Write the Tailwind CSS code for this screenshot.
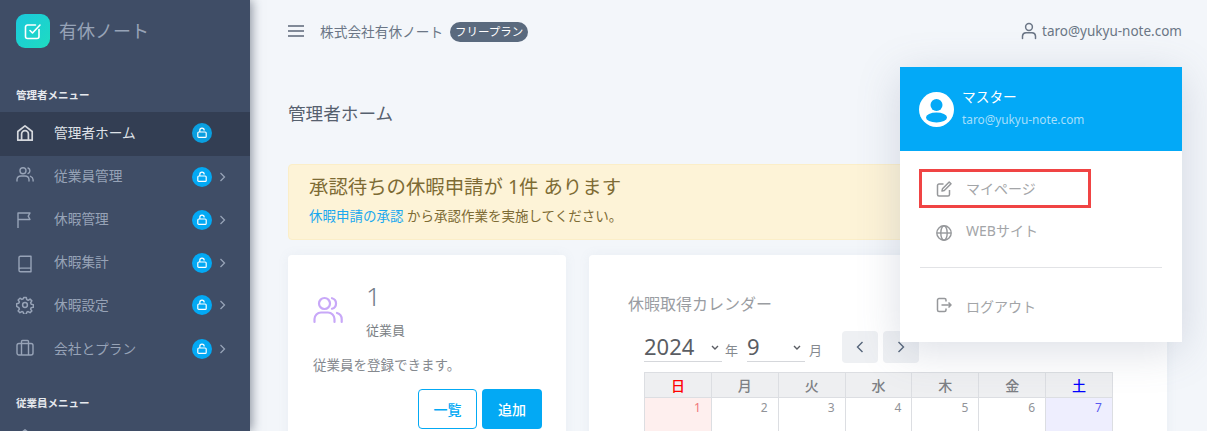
<!DOCTYPE html>
<html lang="ja">
<head>
  <meta charset="UTF-8" />
  <title>有休ノート</title>
  <script src="https://cdn.jsdelivr.net/npm/@tailwindcss/browser@4"></script>
</head>
<body class="h-[431px] w-[1207px] overflow-hidden bg-[#f3f6fa] font-['Noto_Sans','Noto_Sans_CJK_JP',sans-serif]">
<div class="relative flex h-[431px]">

  <!-- Sidebar -->
  <aside class="z-10 h-[431px] w-[250px] shrink-0 overflow-hidden bg-[#3f4d66] shadow-[2px_0_10px_rgba(40,50,70,0.5)]">
    <div class="flex h-[62px] items-center pl-4">
      <div class="flex h-[34px] w-[34px] items-center justify-center rounded-[9px] bg-gradient-to-br from-[#1cc8dc] to-[#1fdcc0]">
        <svg class="h-[20px] w-[20px]" viewBox="0 0 20 20" fill="none" stroke="#fff" stroke-width="1.6" stroke-linecap="round" stroke-linejoin="round"><path d="M16 8.5V15.5a2 2 0 0 1-2 2H4.5a2 2 0 0 1-2-2V6a2 2 0 0 1 2-2h8"/><path d="M7 9.5l2.5 2.5L17 4"/></svg>
      </div>
      <span class="ml-[9px] text-[18px] text-[#97a3b7]">有休ノート</span>
    </div>
    <p class="mt-[25px] pl-4 text-[10.5px] leading-[16px] font-bold text-[#e6e9ee]">管理者メニュー</p>
    <nav class="mt-[9px]">
      <a class="flex h-[44px] items-center bg-[#333e53] pb-[2px] pl-4 text-[#dfe2e8]">
        <svg class="h-[18px] w-[18px] shrink-0" viewBox="0 0 18 18" fill="none" stroke="#d5d8dd" stroke-width="1.7" stroke-linejoin="round"><path d="M1.8 7.5 9 1.8l7.2 5.700v8.700H1.800z"/><path d="M5.600 16.200V10a3.400 3.400 0 0 1 6.800 0v6.200"/></svg>
        <span class="ml-5 w-[138px] text-[13.7px]">管理者ホーム</span>
        <span class="flex h-5 w-5 items-center justify-center rounded-full bg-[#0a9fe0]"><svg class="h-3 w-3" viewBox="0 0 12 12" fill="none" stroke="#fff" stroke-width="1.2"><rect x="1.8" y="5" width="8.4" height="5.4" rx="1"/><path d="M3.800 5V3.400a2.200 2.200 0 0 1 4.400 0"/></svg></span>
      </a>
      <a class="flex h-[43px] items-center pb-[2px] pl-4 text-[#97a3b7]">
        <svg class="-mt-[4px] h-[18px] w-[18px] shrink-0" viewBox="0 0 18 18" fill="none" stroke="#97a3b7" stroke-width="1.4" stroke-linecap="round"><circle cx="7" cy="4.8" r="3"/><path d="M1 15v-1.5A4 4 0 0 1 5 10h4a4 4 0 0 1 4 3.5V15"/><path d="M12 2a3 3 0 0 1 0 5.6M14.5 10.3a4 4 0 0 1 2.6 3.4V15"/></svg>
        <span class="ml-5 w-[138px] text-[13.7px]">従業員管理</span>
        <span class="flex h-5 w-5 items-center justify-center rounded-full bg-[#03a9f4]"><svg class="h-3 w-3" viewBox="0 0 12 12" fill="none" stroke="#fff" stroke-width="1.2"><rect x="1.8" y="5" width="8.4" height="5.4" rx="1"/><path d="M3.800 5V3.400a2.200 2.200 0 0 1 4.400 0"/></svg></span>
        <svg class="ml-[7px] h-[10px] w-[7px]" viewBox="0 0 7 10" fill="none" stroke="#97a3b7" stroke-width="1.3"><path d="M1.5 1l4 4-4 4"/></svg>
      </a>
      <a class="flex h-[43px] items-center pb-[2px] pl-4 text-[#97a3b7]">
        <svg class="h-[18px] w-[18px] shrink-0" viewBox="0 0 18 18" fill="none" stroke="#97a3b7" stroke-width="1.4" stroke-linejoin="round"><path d="M2 17V2h12l-1.800 3.200L14 8.500H2"/></svg>
        <span class="ml-5 w-[138px] text-[13.7px]">休暇管理</span>
        <span class="flex h-5 w-5 items-center justify-center rounded-full bg-[#03a9f4]"><svg class="h-3 w-3" viewBox="0 0 12 12" fill="none" stroke="#fff" stroke-width="1.2"><rect x="1.8" y="5" width="8.4" height="5.4" rx="1"/><path d="M3.800 5V3.400a2.200 2.200 0 0 1 4.400 0"/></svg></span>
        <svg class="ml-[7px] h-[10px] w-[7px]" viewBox="0 0 7 10" fill="none" stroke="#97a3b7" stroke-width="1.3"><path d="M1.5 1l4 4-4 4"/></svg>
      </a>
      <a class="flex h-[43px] items-center pb-[2px] pl-4 text-[#97a3b7]">
        <svg class="mt-[3px] h-[18px] w-[18px] shrink-0" viewBox="0 0 18 18" fill="none" stroke="#97a3b7" stroke-width="1.4" stroke-linejoin="round"><path d="M3 14.5V2.6A1.4 1.4 0 0 1 4.4 1.2H15v15.6H4.6A1.6 1.6 0 0 1 3 15.2v-.7a1.6 1.6 0 0 1 1.6-1.4H15"/></svg>
        <span class="ml-5 w-[138px] text-[13.7px]">休暇集計</span>
        <span class="flex h-5 w-5 items-center justify-center rounded-full bg-[#03a9f4]"><svg class="h-3 w-3" viewBox="0 0 12 12" fill="none" stroke="#fff" stroke-width="1.2"><rect x="1.8" y="5" width="8.4" height="5.4" rx="1"/><path d="M3.800 5V3.400a2.200 2.200 0 0 1 4.400 0"/></svg></span>
        <svg class="ml-[7px] h-[10px] w-[7px]" viewBox="0 0 7 10" fill="none" stroke="#97a3b7" stroke-width="1.3"><path d="M1.5 1l4 4-4 4"/></svg>
      </a>
      <a class="flex h-[43px] items-center pb-[3px] pl-4 text-[#97a3b7]">
        <svg class="h-[18px] w-[18px] shrink-0" viewBox="0 0 24 24" fill="none" stroke="#97a3b7" stroke-width="2" stroke-linejoin="round"><circle cx="12" cy="12" r="3.2"/><path d="M10.3 2h3.4l.6 2.9 1.9.8 2.5-1.6 2.4 2.4-1.6 2.5.8 1.9 2.9.6v3.4l-2.9.6-.8 1.9 1.6 2.5-2.4 2.4-2.5-1.6-1.9.8-.6 2.9h-3.4l-.6-2.9-1.9-.8-2.5 1.6-2.4-2.4 1.6-2.5-.8-1.9L.8 13.7v-3.4l2.9-.6.8-1.9-1.6-2.5 2.4-2.4 2.5 1.6 1.9-.8z"/></svg>
        <span class="ml-5 w-[138px] text-[13.7px]">休暇設定</span>
        <span class="flex h-5 w-5 items-center justify-center rounded-full bg-[#03a9f4]"><svg class="h-3 w-3" viewBox="0 0 12 12" fill="none" stroke="#fff" stroke-width="1.2"><rect x="1.8" y="5" width="8.4" height="5.4" rx="1"/><path d="M3.800 5V3.400a2.200 2.200 0 0 1 4.400 0"/></svg></span>
        <svg class="ml-[7px] h-[10px] w-[7px]" viewBox="0 0 7 10" fill="none" stroke="#97a3b7" stroke-width="1.3"><path d="M1.5 1l4 4-4 4"/></svg>
      </a>
      <a class="flex h-[43px] items-center pb-[1px] pl-4 text-[#97a3b7]">
        <svg class="-mt-[2px] h-[18px] w-[18px] shrink-0" viewBox="0 0 18 18" fill="none" stroke="#97a3b7" stroke-width="1.4" stroke-linejoin="round"><rect x="1" y="4.5" width="16" height="11.5" rx="2"/><path d="M5.500 16V2.500a1 1 0 0 1 1-1h5a1 1 0 0 1 1 1V16"/></svg>
        <span class="ml-5 w-[138px] text-[13.7px]">会社とプラン</span>
        <span class="flex h-5 w-5 items-center justify-center rounded-full bg-[#03a9f4]"><svg class="h-3 w-3" viewBox="0 0 12 12" fill="none" stroke="#fff" stroke-width="1.2"><rect x="1.8" y="5" width="8.4" height="5.4" rx="1"/><path d="M3.800 5V3.400a2.200 2.200 0 0 1 4.400 0"/></svg></span>
        <svg class="ml-[7px] h-[10px] w-[7px]" viewBox="0 0 7 10" fill="none" stroke="#97a3b7" stroke-width="1.3"><path d="M1.5 1l4 4-4 4"/></svg>
      </a>
    </nav>
    <p class="mt-[24px] pl-4 text-[10.5px] leading-[16px] font-bold text-[#e6e9ee]">従業員メニュー</p>
    <div class="mt-[17px] pl-4"><svg class="h-[18px] w-[18px]" viewBox="0 0 18 18" fill="none" stroke="#97a3b7" stroke-width="1.5" stroke-linejoin="round"><path d="M1.8 7.5 9 1.8l7.2 5.700v8.700H1.800z"/></svg></div>
  </aside>

  <!-- Main -->
  <main class="min-w-0 flex-1 pl-[38px] pr-[40px]">
    <header class="flex h-[64px] items-center">
      <svg class="-mt-[3px] h-[12px] w-[16px] shrink-0" viewBox="0 0 16 12" fill="none" stroke="#5c6778" stroke-width="1.4"><path d="M0 1h16M0 6h16M0 11h16"/></svg>
      <span class="ml-[16px] mt-[1px] text-[13.7px] text-[#6b7686]">株式会社有休ノート</span>
      <span class="-mt-[1px] ml-[7px] flex h-5 w-[78px] items-center justify-center rounded-full bg-[#5a6a7e] text-[11.5px] text-white">フリープラン</span>
      <span class="-mr-[15px] -mt-[1px] ml-auto flex items-center text-[13.5px] text-[#6b7686]">
        <svg class="-mt-[2px] mr-[4px] h-[18px] w-[18px]" viewBox="0 0 18 18" fill="none" stroke="#6b7686" stroke-width="1.5" stroke-linecap="round"><circle cx="9" cy="5" r="3.4"/><path d="M2.5 16.500V14a3.500 3.500 0 0 1 3.500-3.200h6a3.500 3.500 0 0 1 3.500 3.200v2.500"/></svg>
        taro@yukyu-note.com
      </span>
    </header>

    <h1 class="mt-[36px] text-[17.6px] leading-[26px] text-[#56606e]">管理者ホーム</h1>

    <section class="mt-[38px] h-[76px] rounded-[4px] border border-[#fbeec8] bg-[#fdf3d7] pl-[20px] pt-[9px]">
      <p class="text-[19.4px] leading-[26px] text-[#7d6b34]">承認待ちの休暇申請が 1件 あります</p>
      <p class="mt-[6px] text-[13.5px] leading-[20px] text-[#7d6b34]"><a class="text-[#1aa9ef]">休暇申請の承認</a> から承認作業を実施してください。</p>
    </section>

    <div class="mt-[15px] flex gap-[23px]">
      <section class="h-[190px] w-[278px] shrink-0 rounded-[4px] bg-white pl-[25px] pr-[24px] pt-[26px] shadow-[0_0_12px_rgba(120,135,160,0.08)]">
        <div class="flex">
          <svg class="mt-[15px] h-[28px] w-[30px] shrink-0" viewBox="0 0 30 28" fill="none" stroke="#c8a8f8" stroke-width="2.2" stroke-linecap="round"><circle cx="11.500" cy="7.500" r="5.500"/><path d="M1.500 26v-3a6.500 6.500 0 0 1 6.500-6.500h7a6.500 6.500 0 0 1 6.500 6.500v3"/><path d="M19 2.200a5.500 5.500 0 0 1 0 10.600M24 17a6.500 6.500 0 0 1 4.700 6v3"/></svg>
          <div class="ml-[23px]">
            <p class="text-[26px] leading-[30px] font-light text-[#727c8a]">1</p>
            <p class="mt-[10px] text-[13px] leading-[18px] text-[#7b7f85]">従業員</p>
          </div>
        </div>
        <p class="mt-[16px] text-[13.5px] leading-[20px] text-[#85898f]">従業員を登録できます。</p>
        <div class="mt-[14px] flex justify-end gap-[5px]">
          <a class="flex h-[40px] w-[59px] items-center justify-center rounded-[4px] border border-[#03a9f4] text-[14px] font-medium text-[#03a9f4]">一覧</a>
          <a class="flex h-[40px] w-[60px] items-center justify-center rounded-[4px] bg-[#03a9f4] text-[14px] font-medium text-white">追加</a>
        </div>
      </section>

      <section class="h-[190px] flex-1 rounded-[4px] bg-white pl-[39px] pt-[37px] shadow-[0_0_12px_rgba(120,135,160,0.08)]">
        <h2 class="text-[16px] leading-[24px] text-[#9a9da2]">休暇取得カレンダー</h2>
        <div class="ml-[16px] mt-[15px] flex h-[32px] items-start">
          <div class="flex h-[31px] w-[78px] items-center justify-between border-b border-[#d5d7db] pr-[3px] pt-[1px] text-[22px] text-[#5a5d63]">2024
            <svg class="mt-[2px] h-[6px] w-[8px]" viewBox="0 0 8 6" fill="none" stroke="#5a5d63" stroke-width="1.4"><path d="M1 1l3 3 3-3"/></svg>
          </div>
          <span class="ml-[3px] mt-[9px] text-[13px] leading-[20px] text-[#85898f]">年</span>
          <div class="ml-[9px] flex h-[31px] w-[58px] items-center justify-between border-b border-[#d5d7db] pr-[4px] pt-[1px] text-[22px] text-[#5a5d63]">9
            <svg class="mt-[2px] h-[6px] w-[8px]" viewBox="0 0 8 6" fill="none" stroke="#5a5d63" stroke-width="1.4"><path d="M1 1l3 3 3-3"/></svg>
          </div>
          <span class="ml-[4px] mt-[9px] text-[13px] leading-[20px] text-[#85898f]">月</span>
          <a class="ml-[20px] flex h-[32px] w-[36px] items-center justify-center rounded-[4px] bg-[#eef0f3]"><svg class="h-[12px] w-[8px]" viewBox="0 0 8 12" fill="none" stroke="#56657a" stroke-width="1.4"><path d="M6.500 1l-5 5 5 5"/></svg></a>
          <a class="ml-[5px] flex h-[32px] w-[36px] items-center justify-center rounded-[4px] bg-[#eef0f3]"><svg class="h-[12px] w-[8px]" viewBox="0 0 8 12" fill="none" stroke="#56657a" stroke-width="1.4"><path d="M1.500 1l5 5-5 5"/></svg></a>
        </div>
        <div class="ml-[16px] mt-[9px] grid w-[469px] grid-cols-7 border-l border-t border-[#dcdee2] text-[14px]">
          <div class="flex h-[25px] items-center justify-center border-b border-r border-[#dcdee2] bg-[#eeeff1] font-medium text-[#f00]">日</div>
          <div class="flex h-[25px] items-center justify-center border-b border-r border-[#dcdee2] bg-[#eeeff1] font-medium text-[#7d7f84]">月</div>
          <div class="flex h-[25px] items-center justify-center border-b border-r border-[#dcdee2] bg-[#eeeff1] font-medium text-[#7d7f84]">火</div>
          <div class="flex h-[25px] items-center justify-center border-b border-r border-[#dcdee2] bg-[#eeeff1] font-medium text-[#7d7f84]">水</div>
          <div class="flex h-[25px] items-center justify-center border-b border-r border-[#dcdee2] bg-[#eeeff1] font-medium text-[#7d7f84]">木</div>
          <div class="flex h-[25px] items-center justify-center border-b border-r border-[#dcdee2] bg-[#eeeff1] font-medium text-[#7d7f84]">金</div>
          <div class="flex h-[25px] items-center justify-center border-b border-r border-[#dcdee2] bg-[#eeeff1] font-medium text-[#00f]">土</div>
          <div class="h-[40px] border-r border-[#dcdee2] bg-[#feefee] pr-[10px] pt-[1px] text-right text-[12px] text-[#f0777a]">1</div>
          <div class="h-[40px] border-r border-[#dcdee2] pr-[10px] pt-[1px] text-right text-[12px] text-[#919398]">2</div>
          <div class="h-[40px] border-r border-[#dcdee2] pr-[10px] pt-[1px] text-right text-[12px] text-[#919398]">3</div>
          <div class="h-[40px] border-r border-[#dcdee2] pr-[10px] pt-[1px] text-right text-[12px] text-[#919398]">4</div>
          <div class="h-[40px] border-r border-[#dcdee2] pr-[10px] pt-[1px] text-right text-[12px] text-[#919398]">5</div>
          <div class="h-[40px] border-r border-[#dcdee2] pr-[10px] pt-[1px] text-right text-[12px] text-[#919398]">6</div>
          <div class="h-[40px] border-r border-[#dcdee2] bg-[#eeeefe] pr-[10px] pt-[1px] text-right text-[12px] text-[#5a5af0]">7</div>
        </div>
      </section>
    </div>
  </main>

  <!-- User dropdown -->
  <div class="absolute left-[900px] top-[67px] z-20 h-[275px] w-[282px] bg-white shadow-[0_8px_40px_rgba(90,105,135,0.22)]">
    <div class="flex h-[84px] items-center bg-[#03a9f7] pl-[19px]">
      <svg class="h-[35px] w-[35px]" viewBox="0 0 35 35"><circle cx="17.500" cy="17.500" r="17.500" fill="#fff"/><circle cx="17.500" cy="13" r="6" fill="#03a9f7"/><ellipse cx="17.500" cy="25.500" rx="10.500" ry="5" fill="#03a9f7"/></svg>
      <div class="-mt-[5px] ml-[8px]">
        <p class="text-[13.7px] leading-[20px] text-white">マスター</p>
        <p class="mt-[4px] text-[11.8px] leading-[16px] text-[#a6dffb]">taro@yukyu-note.com</p>
      </div>
    </div>
    <div class="mx-[20px]">
      <a class="-ml-[1px] mt-[18px] flex h-[39px] w-[172px] items-center border-[3px] border-[#f04444] pl-[14px] text-[14px] text-[#a3a5a8]">
        <svg class="h-[16px] w-[16px]" viewBox="0 0 16 16" fill="none" stroke="#96989b" stroke-width="1.500" stroke-linejoin="round"><path d="M13.500 9v4.500a1.500 1.500 0 0 1-1.500 1.500H3a1.500 1.500 0 0 1-1.500-1.500V4.500A1.500 1.500 0 0 1 3 3h4.500"/><path d="M6.500 7.800 13.200 1l1.800 1.800L8.300 9.500 6 10z"/></svg>
        <span class="ml-[14px]">マイページ</span>
      </a>
      <a class="mt-[2px] flex h-[40px] items-center pl-[16px] text-[14px] text-[#a3a5a8]">
        <svg class="mt-[5px] h-[16px] w-[16px]" viewBox="0 0 16 16" fill="none" stroke="#96989b" stroke-width="1.400"><circle cx="8" cy="8" r="7.200"/><ellipse cx="8" cy="8" rx="3.200" ry="7.200"/><path d="M1 8h14"/></svg>
        <span class="ml-[14px]">WEBサイト</span>
      </a>
      <div class="mt-[17px] border-t border-[#e2e3e6]"></div>
      <a class="mt-[18px] flex h-[40px] items-center pl-[16px] text-[14px] text-[#a3a5a8]">
        <svg class="-mt-[2px] h-[16px] w-[16px]" viewBox="0 0 16 16" fill="none" stroke="#96989b" stroke-width="1.500" stroke-linejoin="round"><path d="M10 4.500V3a1.500 1.500 0 0 0-1.500-1.500H3A1.500 1.500 0 0 0 1.500 3v10A1.500 1.500 0 0 0 3 14.500h5.500A1.500 1.500 0 0 0 10 13v-1.500"/><path d="M5.500 8h9.500M12.500 5.500 15 8l-2.500 2.500"/></svg>
        <span class="ml-[14px]">ログアウト</span>
      </a>
    </div>
  </div>
</div>
</body>
</html>
